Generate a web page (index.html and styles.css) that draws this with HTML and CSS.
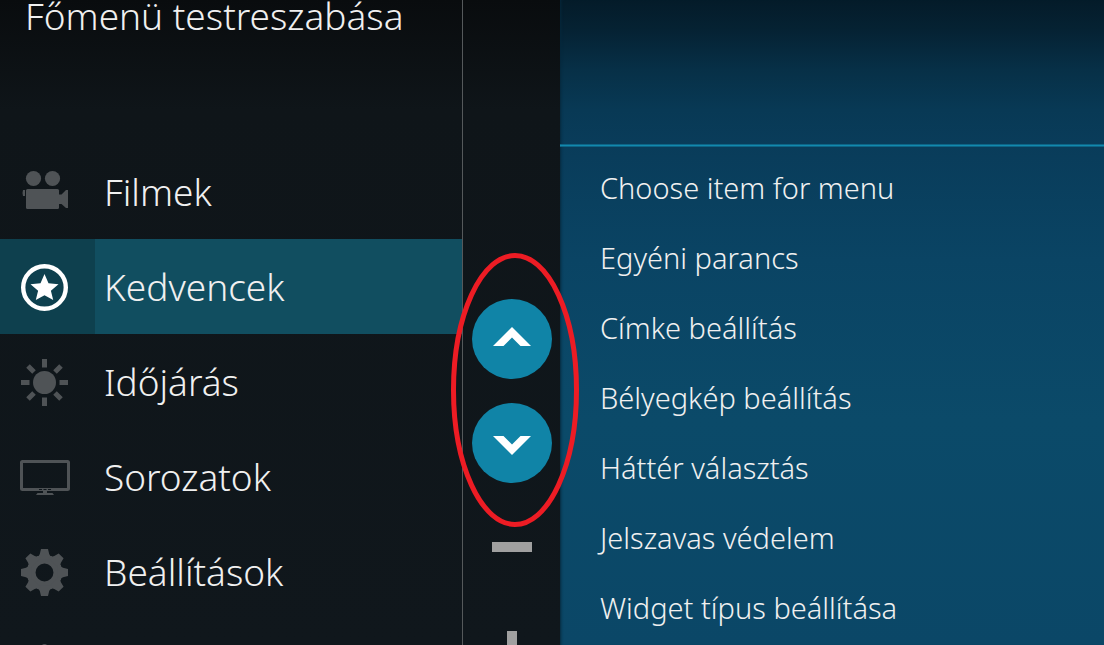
FILE: index.html
```html
<!DOCTYPE html>
<html lang="hu">
<head>
    <meta charset="UTF-8">
    <meta name="viewport" content="width=device-width, initial-scale=1.0">
    <title>Főmenü testreszabása</title>
    <link rel="stylesheet" href="styles.css">
</head>
<body>
    <div class="window">
        <nav class="main-menu">
            <h1 class="title">Főmenü testreszabása</h1>
            <ul class="menu-list">
                <li>
                    <button type="button" class="menu-item">
                        <span class="menu-icon">
                            <svg width="47" height="47" viewBox="0 1 47 47">
                                <circle cx="12.500" cy="10.500" r="7.600"/>
                                <circle cx="31.500" cy="10.500" r="7.600"/>
                                <rect x="5" y="21" width="33" height="20" rx="1.500"/>
                                <path d="M2 22h2v6H2q-1-3 0-6zM38 26.500h2.500L45 22h2v18h-2l-4.500-4H38z"/>
                            </svg>
                        </span>
                        <span class="menu-label">Filmek</span>
                    </button>
                </li>
                <li>
                    <button type="button" class="menu-item selected">
                        <span class="menu-icon">
                            <svg width="47" height="47" viewBox="0 0 47 47">
                                <circle cx="23.500" cy="23.500" r="21.300" fill="none" stroke="currentColor" stroke-width="4.400"/>
                                <path d="M23.500 10l4 9.300 10 .9-7.600 6.600 2.300 9.200-8.700-4.800-8.700 4.800 2.300-9.200-7.600-6.600 10-.9z"/>
                            </svg>
                        </span>
                        <span class="menu-label">Kedvencek</span>
                    </button>
                </li>
                <li>
                    <button type="button" class="menu-item">
                        <span class="menu-icon">
                            <svg width="47" height="47" viewBox="0.5 0.5 47 47">
                                <circle cx="24" cy="24" r="11.500"/>
                                <g stroke="currentColor" stroke-width="5">
                                    <path d="M24 .5v8.500M24 39v8.500M.5 24h8.500M39 24h8.500M7.500 7.500l6 6M34.500 34.500l6 6M7.500 40.500l6-6M34.500 13.500l6-6"/>
                                </g>
                            </svg>
                        </span>
                        <span class="menu-label">Időjárás</span>
                    </button>
                </li>
                <li>
                    <button type="button" class="menu-item">
                        <span class="menu-icon">
                            <svg width="51" height="47" viewBox="-1 1 51 47">
                                <rect x="1.500" y="8.500" width="47" height="28" rx="1" fill="none" stroke="currentColor" stroke-width="3"/>
                                <path d="M23 38h4v2h5.500l1.500 2H16l1.500-2H23z"/>
                                <path class="cutout" d="M19 36h3v1h-3zM23.500 36h3v1h-3zM28 36h3v1h-3z"/>
                            </svg>
                        </span>
                        <span class="menu-label">Sorozatok</span>
                    </button>
                </li>
                <li>
                    <button type="button" class="menu-item">
                        <span class="menu-icon">
                            <svg width="47" height="47" viewBox="0.5 0.5 47 47">
                                <defs>
                                    <path id="tooth" d="M20.500.5h7l1.200 5q.5 2 2.800 2.500v3h-15V8q2.300-.5 2.800-2.500z"/>
                                </defs>
                                <circle cx="24" cy="24" r="13.200" fill="none" stroke="currentColor" stroke-width="8.500"/>
                                <use href="#tooth"/>
                                <use href="#tooth" transform="rotate(45 24 24)"/>
                                <use href="#tooth" transform="rotate(90 24 24)"/>
                                <use href="#tooth" transform="rotate(135 24 24)"/>
                                <use href="#tooth" transform="rotate(180 24 24)"/>
                                <use href="#tooth" transform="rotate(225 24 24)"/>
                                <use href="#tooth" transform="rotate(270 24 24)"/>
                                <use href="#tooth" transform="rotate(315 24 24)"/>
                            </svg>
                        </span>
                        <span class="menu-label">Beállítások</span>
                    </button>
                </li>
                <li>
                    <button type="button" class="menu-item">
                        <span class="menu-icon">
                            <svg width="47" height="47" viewBox="0 0 47 47">
                                <circle cx="23.500" cy="3" r="3"/>
                            </svg>
                        </span>
                    </button>
                </li>
            </ul>
        </nav>

        <div class="order-bar">
            <button type="button" class="round-button" aria-label="Fel">
                <svg width="40" height="24" viewBox="0 0 40 24"><path d="M20 0L39 19H28.500L20 10.500 11.500 19H1z"/></svg>
            </button>
            <button type="button" class="round-button" aria-label="Le">
                <svg width="40" height="24" viewBox="0 0 40 24"><path d="M20 24L39 5H28.500L20 13.500 11.500 5H1z"/></svg>
            </button>
            <button type="button" class="round-button plain" aria-label="Törlés">
                <svg width="40" height="40" viewBox="0 0 40 40"><path d="M0 15h40v10H0z"/></svg>
            </button>
            <button type="button" class="round-button plain" aria-label="Hozzáadás">
                <svg width="40" height="40" viewBox="0 0 40 40"><path d="M15 0h10v15h15v10H25v15H15V25H0V15h15z"/></svg>
            </button>
            <!-- red marker round the two move buttons -->
            <svg class="marker" width="130" height="276" viewBox="0 0 130 276">
                <ellipse cx="65" cy="138" rx="61.500" ry="134.500"/>
            </svg>
        </div>

        <main class="options">
            <div class="options-header"></div>
            <ul class="options-list">
                <li><button type="button" class="option">Choose item for menu</button></li>
                <li><button type="button" class="option">Egyéni parancs</button></li>
                <li><button type="button" class="option">Címke beállítás</button></li>
                <li><button type="button" class="option">Bélyegkép beállítás</button></li>
                <li><button type="button" class="option">Háttér választás</button></li>
                <li><button type="button" class="option">Jelszavas védelem</button></li>
                <li><button type="button" class="option">Widget típus beállítása</button></li>
            </ul>
        </main>
    </div>
</body>
</html>
```
FILE: styles.css
```css
* {
    box-sizing: border-box;
}
body {
    margin: 0;
    font-family: "Noto Sans", "Open Sans", sans-serif;
    font-weight: 300;
    color: #f0f0f0;
    background-color: #10181d;
}
.window {
    display: grid;
    grid-template-columns: 463px 97px 1fr;
    height: 100vh;
    overflow: hidden;
    background: linear-gradient(#090c0e 0, #0f1519 110px, #10171c 100%);
}
ul {
    list-style: none;
    margin: 0;
    padding: 0;
}
button {
    font: inherit;
    color: inherit;
    background: none;
    border: none;
    padding: 0;
    cursor: pointer;
}
svg {
    display: block;
    fill: currentColor;
}
.main-menu {
    border-right: 1px solid #55595b;
    min-height: 0;
}
.title {
    height: 144px;
    margin: 0;
    padding-left: 25px;
    font-size: 37px;
    font-weight: 300;
    line-height: 32px;
}
.menu-item {
    display: flex;
    width: 100%;
    height: 95px;
    font-size: 37px;
    text-align: left;
}
.menu-icon {
    display: flex;
    align-items: center;
    justify-content: center;
    width: 95px;
    height: 95px;
    padding-top: 2px;
    padding-right: 6px;
    color: #4f5356;
}
.menu-label {
    padding-left: 9px;
    line-height: 95px;
}
.selected {
    background-color: #114e60;
}
.selected .menu-icon {
    color: #fff;
    background-color: #0e404e;
}
.cutout {
    fill: #10171c;
}
.order-bar {
    position: relative;
    display: flex;
    flex-direction: column;
    align-items: center;
    gap: 24px;
    padding-top: 299px;
    min-height: 0;
}
.round-button {
    display: flex;
    flex-shrink: 0;
    align-items: center;
    justify-content: center;
    width: 80px;
    height: 80px;
    border-radius: 50%;
    color: #fff;
    background-color: #1084a7;
}
.plain {
    color: #a0a0a0;
    background: none;
}
.marker {
    position: absolute;
    top: 252px;
    left: -13px;
    z-index: 1;
    pointer-events: none;
}
.marker ellipse {
    fill: none;
    stroke: #ed1c24;
    stroke-width: 5px;
}
.options {
    min-width: 0;
    background: linear-gradient(#041b29 0, #052233 30px, #073047 70px, #083955 110px, #093c5a 145px, #0a4464 260px, #0b4a69 420px, #0b4767 100%);
    box-shadow: inset 3px 0 3px -2px #06283c;
}
.options-header {
    height: 147px;
    background: linear-gradient(transparent 144px, #0d6486 144px, #0d6486 145px, #1289ae 145px, #1289ae 146px, #0d6486 146px);
}
.options-list {
    padding-top: 6px;
}
.option {
    display: block;
    width: 100%;
    height: 70px;
    padding-left: 40px;
    font-size: 29px;
    line-height: 70px;
    text-align: left;
    white-space: nowrap;
}
```
